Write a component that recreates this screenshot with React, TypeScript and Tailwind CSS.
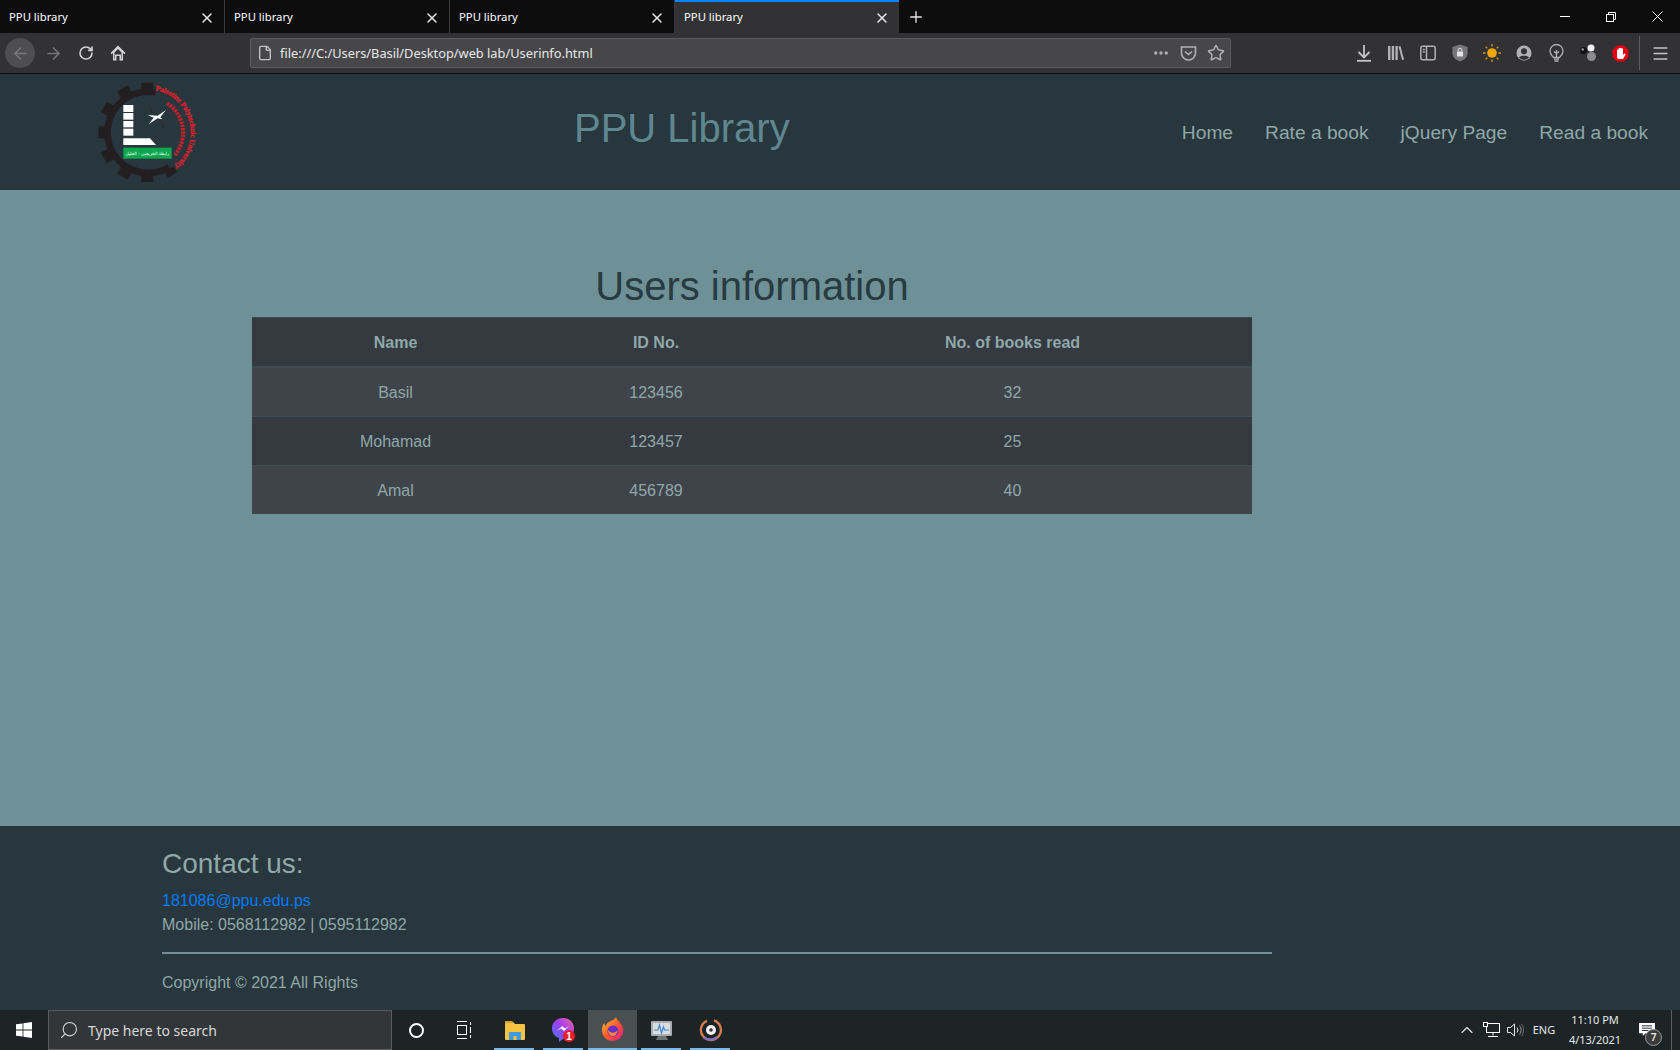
import { ArrowLeft, ArrowRight, ChevronUp, Ellipsis, File, Menu, Plus, RotateCw, Search, Star, X } from "lucide-react"

const Tab = ({ active }: { active?: boolean }) => (
  <div className={active ? "w-[224px] h-full flex items-center pl-[9px] pr-[9px] bg-[#323234] border-t-2 border-[#0a84ff] text-white" : "w-[225px] h-full flex items-center pl-[9px] pr-[9px] pt-[2px] border-r border-[#3a3a3c] text-white"}>
    <span className="flex-1 text-[11.3px]">PPU library</span>
    <X size={16} strokeWidth={2.2} className="text-[#e8e8e8]" />
  </div>
)

const Logo = () => (
  <svg viewBox="0 12 390 324" className="w-[130px] h-[108px] shrink-0">
    <g fill="#231f20">
      <path d="M227 67A122 122 0 1 0 268 291" fill="none" stroke="#231f20" strokeWidth="20" />
      <rect x="184" y="38" width="36" height="26" />
      <rect x="184" y="310" width="36" height="26" />
      <rect x="55" y="169" width="26" height="36" />
      <rect x="116" y="53" width="36" height="26" transform="rotate(-30 134 66)" />
      <rect x="65" y="104" width="36" height="26" transform="rotate(-60 83 117)" />
      <rect x="65" y="244" width="36" height="26" transform="rotate(60 83 257)" />
      <rect x="116" y="295" width="36" height="26" transform="rotate(30 134 308)" />
      <rect x="256" y="295" width="32" height="22" transform="rotate(-30 272 306)" />
      <path d="M208 108l8 12-3 0 8 10-11-9 3 0zM244 156l8 12-3 0 8 10-11-9 3 0z" />
    </g>
    <rect x="130" y="105" width="30" height="21" fill="#fff" />
    <rect x="130" y="129" width="30" height="20" fill="#fff" />
    <rect x="130" y="153" width="30" height="19" fill="#fff" />
    <rect x="130" y="176" width="30" height="21" fill="#fff" />
    <polygon points="130,205 210,205 228,225 130,225" fill="#fff" />
    <path d="M203 135l30 2 25-17-17 22 6 6-14-3-27 18 15-20z" fill="#fff" />
    <rect x="130" y="233" width="145" height="33" fill="#0ca74f" />
    <text x="202" y="254" textAnchor="middle" fill="#fff" fontSize="13" fontFamily="'DejaVu Sans', sans-serif">رابطة الخريجين - الخليل</text>
    <path id="logo-arc" d="M226 61A128 128 0 0 1 240 310" fill="none" />
    <text fill="#e0202c" stroke="#e0202c" strokeWidth="0.8" fontSize="22" fontWeight="700" fontFamily="'Liberation Serif', serif" textLength="295" lengthAdjust="spacing">
      <textPath href="#logo-arc">Palestine Polytechnic University</textPath>
    </text>
    <path d="M262 100A105 105 0 0 1 285 255" stroke="#c8202a" strokeWidth="12" strokeDasharray="7 3" fill="none" />
  </svg>
)

const Pocket = () => (
  <svg width="17" height="17" viewBox="0 0 17 17" fill="none" stroke="#b1b1b3" strokeWidth="1.6"><path d="M1.5 2h14v6a7 7 0 0 1-14 0z" /><path d="M5 6.5l3.5 3 3.5-3" /></svg>
)

const ToolIcons = () => (
  <div className="flex items-center text-[#c4c4c6]">
    <div className="w-[32px] flex justify-center">
      <svg width="14" height="17" viewBox="0 0 14 17" fill="none" stroke="#c4c4c6" strokeWidth="1.8"><path d="M7 0v12M1.500 7L7 12.500 12.500 7" /><path d="M0 15.800h14" /></svg>
    </div>
    <div className="w-[32px] flex justify-center">
      <svg width="16" height="16" viewBox="0 0 16 16" fill="#b1b1b3"><rect x="0" y="1" width="2.4" height="14" /><rect x="3.7" y="1" width="2.4" height="14" /><rect x="7.4" y="1" width="2.4" height="14" /><path d="M10.5 1.5l2-.5 3.5 13.6-2 .4z" /></svg>
    </div>
    <div className="w-[32px] flex justify-center">
      <svg width="16" height="16" viewBox="0 0 16 16" fill="none" stroke="#b1b1b3" strokeWidth="1.5"><rect x=".8" y="1.3" width="14.4" height="13.4" rx="2" /><path d="M6.5 1.5v13M2.8 4.5h2M2.8 7h2" /></svg>
    </div>
    <div className="w-[32px] flex justify-center">
      <svg width="16" height="18" viewBox="0 0 16 18"><path d="M8 .5l7.5 2.5v6c0 4-3 7-7.5 8.500C3.500 16 .5 13 .5 9V3z" fill="#77777a" /><rect x="5" y="7.500" width="6" height="5" rx=".6" fill="#e4e4e4" /><path d="M6.200 7.500V6a1.800 1.800 0 0 1 3.600 0v1.500" fill="none" stroke="#e4e4e4" /></svg>
    </div>
    <div className="w-[32px] flex justify-center">
      <svg width="18" height="18" viewBox="0 0 18 18"><circle cx="9" cy="9" r="4.800" fill="#f0a80c" /><path d="M9 0v2.500M9 15.500V18M0 9h2.500M15.500 9H18M2.600 2.600l1.800 1.800M13.600 13.600l1.800 1.800M2.600 15.400l1.800-1.800M13.600 4.400l1.800-1.800" stroke="#d9980f" strokeWidth="1.300" /></svg>
    </div>
    <div className="w-[32px] flex justify-center">
      <svg width="16" height="16" viewBox="0 0 16 16"><circle cx="8" cy="8" r="7.500" fill="#b1b1b3" /><circle cx="8" cy="6.300" r="3" fill="#323234" /><path d="M3 12.500c1.500-2.500 8.500-2.500 10 0a6.500 6.500 0 0 1-10 0z" fill="#323234" /></svg>
    </div>
    <div className="w-[32px] flex justify-center">
      <svg width="15" height="18" viewBox="0 0 15 18" fill="none" stroke="#b1b1b3" strokeWidth="1.300"><path d="M4.500 13.500C3 11.500 1 10.500 1 7a6.500 6.500 0 0 1 13 0c0 3.500-2 4.500-3.500 6.500z" /><path d="M7.500 6v7.500M5 7.500l2.500 2 2.500-2" /><path d="M5 15.200h5M5.500 17h4" /></svg>
    </div>
    <div className="w-[32px] flex justify-center">
      <svg width="16" height="18" viewBox="0 0 16 18"><circle cx="3.500" cy="6.500" r="3.400" fill="#111" /><circle cx="2.700" cy="5.500" r="1.200" fill="#9a9a9a" /><circle cx="11" cy="4" r="3.500" fill="#f2f2f2" /><circle cx="11.500" cy="12.500" r="4.500" fill="#8c8c8e" /></svg>
    </div>
    <div className="w-[32px] flex justify-center">
      <svg width="17" height="17" viewBox="0 0 17 17"><path d="M5 .5h7L16.500 5v7L12 16.500H5L.5 12V5z" fill="#e60012" /><path d="M5 9V5a.8.8 0 0 1 1.500 0V3.500a.8.8 0 0 1 1.500 0v-.3a.8.8 0 0 1 1.500 0v.5a.8.8 0 0 1 1.500 0V10l1.200-1.200a.8.8 0 0 1 1.100 1.200L11 14H7a2 2 0 0 1-2-2z" fill="#fff" /></svg>
    </div>
  </div>
)

const TaskSlot = ({ active, children }: { active?: boolean; children: React.ReactNode }) => (
  <div className={active ? "w-[49px] h-full flex items-center justify-center bg-[#4a5052] border-b-2 border-[#76b9ed]" : "w-[49px] h-full flex items-center justify-center relative"}>
    {children}
    {!active && <div className="absolute bottom-0 left-[4px] right-[5px] h-[2px] bg-[#76b9ed]" />}
  </div>
)

const rows = [
  { name: "Basil", id: "123456", books: "32", cell: "h-[49px] pt-[2px] bg-[#3f444b] border-b border-[#3f4c55]" },
  { name: "Mohamad", id: "123457", books: "25", cell: "h-[49px] pt-[2px] border-b border-[#3f4c55]" },
  { name: "Amal", id: "456789", books: "40", cell: "h-[48px] pt-[2px] bg-[#3f444b]" },
]

const App = () => {
  return (
    <div className="w-[1680px] h-[1050px] flex flex-col overflow-hidden bg-[#6d9197] font-['Liberation_Sans',Arial,sans-serif]">
      {/* browser chrome */}
      <div className="h-[33px] shrink-0 flex bg-[#0c0c0d] font-['Noto_Sans',sans-serif]">
        <Tab />
        <Tab />
        <Tab />
        <Tab active />
        <div className="w-[33px] h-full flex items-center justify-center text-[#e8e8e8]"><Plus size={18} strokeWidth={1.8} /></div>
        <div className="ml-auto flex items-center h-full text-white">
          <div className="w-[46px] flex justify-center"><div className="w-[10px] h-px bg-white" /></div>
          <div className="w-[46px] flex justify-center">
            <svg width="10" height="10" viewBox="0 0 10 10" fill="none" stroke="#fff"><rect x=".5" y="2.500" width="7" height="7" /><path d="M2.500 2.500v-2h7v7h-2" /></svg>
          </div>
          <div className="w-[46px] flex justify-center">
            <svg width="11" height="11" viewBox="0 0 11 11" stroke="#fff"><path d="M.5.500l10 10M10.500.500l-10 10" /></svg>
          </div>
        </div>
      </div>
      <div className="h-[41px] shrink-0 flex items-center bg-[#323234] border-b border-[#0c0c0d] font-['Noto_Sans',sans-serif]">
        <div className="w-[250px] flex items-center pl-[5px]">
          <div className="w-[30px] h-[30px] rounded-full bg-[#4e4e50] flex items-center justify-center text-[#77777a]"><ArrowLeft size={19} /></div>
          <div className="w-[36px] flex justify-center text-[#77777a]"><ArrowRight size={19} /></div>
          <div className="w-[30px] flex justify-center text-[#d4d4d6]"><RotateCw size={16} strokeWidth={2.4} /></div>
          <div className="w-[33px] flex justify-center">
            <svg width="16" height="16" viewBox="0 0 16 16"><path d="M8 .5L.5 8l1.200 1.200L3 8v7.500h3.500V11h3v4.500H13V8l1.300 1.200L15.500 8z" fill="#d4d4d6" /><path d="M4.500 7.500L8 4l3.500 3.500V14h-.5V9.500H5V14h-.5z" fill="#323234" /></svg>
          </div>
        </div>
        <div className="w-[981px] h-[30px] flex items-center pl-[6px] pr-[5px] bg-[#474749] border border-[#5c5c5e] rounded-[2px]">
          <File size={16} className="text-[#c4c4c6]" />
          <span className="ml-[7px] mt-[2px] flex-1 text-[12.8px] text-[#e8e8ea]">file:///C:/Users/Basil/Desktop/web lab/Userinfo.html</span>
          <Ellipsis size={18} strokeWidth={2.4} className="text-[#b1b1b3]" />
          <div className="ml-[10px] mr-[10px]"><Pocket /></div>
          <Star size={18} strokeWidth={2} className="text-[#b1b1b3]" />
        </div>
        <div className="ml-[117px]"><ToolIcons /></div>
        <div className="w-px h-[34px] bg-[#5c5c5e] ml-[3px]" />
        <div className="flex-1 flex justify-center text-[#c4c4c6]"><Menu size={19} strokeWidth={2} /></div>
      </div>

      {/* site header */}
      <header className="h-[116px] shrink-0 flex items-start pl-[80px] pr-4 bg-[#28363d]">
        <Logo />
        <h1 className="ml-[364px] mt-[30px] text-[40px] leading-[48px] text-[#5f8791]">PPU Library</h1>
        <nav className="ml-auto mt-[44px] flex text-[19.2px] leading-[30px] text-[#8fa8a8]">
          <a className="px-4">Home</a>
          <a className="px-4">Rate a book</a>
          <a className="px-4">jQuery Page</a>
          <a className="px-4">Read a book</a>
        </nav>
      </header>

      <main className="flex-1 pt-[72px] pl-[252px]">
        <h2 className="w-[1000px] text-center text-[40px] leading-[48px] mb-[7px] text-[#2a3a41]">Users information</h2>
        <table className="w-[1000px] table-fixed border-separate border-spacing-0 bg-[#343a40] text-[16px] leading-[24px] text-[#8fa8a8] text-center">
          <colgroup>
            <col className="w-[287px]" />
            <col className="w-[234px]" />
            <col />
          </colgroup>
          <thead>
            <tr>
              <th className="h-[51px] pt-[2px] font-bold border-t border-b-2 border-[#3f4c55]">Name</th>
              <th className="h-[51px] pt-[2px] font-bold border-t border-b-2 border-[#3f4c55]">ID No.</th>
              <th className="h-[51px] pt-[2px] font-bold border-t border-b-2 border-[#3f4c55]">No. of books read</th>
            </tr>
          </thead>
          <tbody>
            {rows.map((r) => (
              <tr key={r.id}>
                <td className={r.cell}>{r.name}</td>
                <td className={r.cell}>{r.id}</td>
                <td className={r.cell}>{r.books}</td>
              </tr>
            ))}
          </tbody>
        </table>
      </main>

      <footer className="h-[184px] shrink-0 pt-[21px] pl-[162px] bg-[#28363d] text-[16px] leading-[24px] text-[#8fa8a8]">
        <h3 className="text-[28px] leading-[34px] mb-[8px]">Contact us:</h3>
        <a className="block text-[#007bff]">181086@ppu.edu.ps</a>
        <div>Mobile: 0568112982 | 0595112982</div>
        <hr className="w-[1110px] mt-[15px] mb-[17px] border-t-2 border-[#6d9197]" />
        <div>Copyright © 2021 All Rights</div>
      </footer>

      {/* windows taskbar */}
      <div className="h-[40px] shrink-0 flex items-center bg-[#1d2426] text-white font-['Noto_Sans',sans-serif]">
        <div className="w-[48px] flex justify-center">
          <svg width="16" height="16" viewBox="0 0 16 16" fill="#fff"><path d="M0 2.300l6.600-.9v6.200H0zM7.400 1.300L16 0v7.600H7.400zM0 8.400h6.600v6.200L0 13.700zM7.400 8.400H16V16l-8.600-1.200z" /></svg>
        </div>
        <div className="w-[344px] h-full flex items-center pl-[10px] bg-[#333638] border border-[#5a5d5f] text-[#d8d8d8]">
          <Search size={20} strokeWidth={1.3} className="-scale-x-100" />
          <span className="ml-[9px] text-[14px]">Type here to search</span>
        </div>
        <div className="w-[48px] flex justify-center">
          <div className="w-[15px] h-[15px] rounded-full border-2 border-white" />
        </div>
        <div className="w-[48px] flex justify-center">
          <svg width="16" height="20" viewBox="0 0 16 20" fill="none" stroke="#fff"><path d="M1 1.500h10M1 18.500h10" /><rect x="1.500" y="5.500" width="9" height="9" /><path d="M14.500 2v3M14.500 7v6M14.500 15v3" /></svg>
        </div>
        <div className="w-[2px]" />
        <TaskSlot>
          <svg width="22" height="24" viewBox="0 0 22 24"><path d="M1 6a2 2 0 0 1 2-2h6l2 2h9a1 1 0 0 1 1 1v14a1 1 0 0 1-1 1H2a1 1 0 0 1-1-1z" fill="#f5c242" /><path d="M1 3h7l2 2H1z" fill="#d99f27" /><rect x="5" y="14" width="12" height="8" fill="#3d9be0" /><rect x="9.500" y="18" width="3" height="4" fill="#f5c242" /></svg>
        </TaskSlot>
        <TaskSlot>
          <svg width="26" height="28" viewBox="0 0 26 28">
            <defs><linearGradient id="msg" x1="0" y1="1" x2="1" y2="0"><stop offset="0" stopColor="#3a7cf5" /><stop offset=".55" stopColor="#a23cf0" /><stop offset="1" stopColor="#f2679a" /></linearGradient></defs>
            <path d="M12 2c6.500 0 11 4.500 11 10.500S18.500 23 12 23l-4 3v-4C3.500 20.500 1 17 1 12.500 1 6.500 5.500 2 12 2z" fill="url(#msg)" />
            <path d="M6 15l5-5 3 2.500 4-2.500-5 5-3-2.500z" fill="#fff" />
            <circle cx="18" cy="20" r="6" fill="#ee1c25" />
            <text x="18" y="23.500" textAnchor="middle" fontSize="10" fontWeight="700" fill="#fff" fontFamily="'Liberation Sans', sans-serif">1</text>
          </svg>
        </TaskSlot>
        <TaskSlot active>
          <svg width="24" height="26" viewBox="0 0 24 26">
            <defs><linearGradient id="fx" x1="0" y1="0" x2="1" y2="1"><stop offset="0" stopColor="#ffc928" /><stop offset=".5" stopColor="#ff5a2c" /><stop offset="1" stopColor="#e31587" /></linearGradient></defs>
            <path d="M15 1c.5 3 3 4 5 7 2 3 3 6 2 9-1.500 5-6 8-10.500 8C5.500 25 1 20 1 14.500 1 11 2 8.500 3.500 7c0 1.500.5 2.500 1.500 3 .5-3 3-4 5-5 2-1 4-2 5-4z" fill="url(#fx)" />
            <circle cx="12" cy="15" r="5.500" fill="#6a2fc9" />
            <path d="M7 14c2 3 7 4 10 0-1 4-3 6-5 6s-5-2-5-6z" fill="#ff8a2c" />
          </svg>
        </TaskSlot>
        <TaskSlot>
          <svg width="24" height="24" viewBox="0 0 24 24"><rect x="1" y="3" width="21" height="15" rx="1" fill="#a9adaf" /><rect x="3" y="5" width="17" height="11" fill="#d9dde0" /><path d="M4 12h4l1.500-5 2 8 2-6 1 3H19" fill="none" stroke="#3f8ad0" strokeWidth="1.200" /><path d="M8 18h8l2 4H6z" fill="#6f7274" /></svg>
        </TaskSlot>
        <TaskSlot>
          <svg width="24" height="24" viewBox="0 0 24 24" fill="none"><path d="M15 2.500A10 10 0 1 1 8 2.800" stroke="#d67b4e" strokeWidth="2.400" /><path d="M18 19a10 10 0 0 1-13 .500" stroke="#8a6bc0" strokeWidth="2.400" /><circle cx="12" cy="12" r="5" fill="#f0f0f0" /><circle cx="12" cy="12" r="1.800" fill="#333" /></svg>
        </TaskSlot>
        <div className="ml-auto flex items-center h-full text-[#e8e8e8]">
          <div className="w-[24px] flex justify-center"><ChevronUp size={20} strokeWidth={1.3} /></div>
          <div className="w-[24px] flex justify-center">
            <svg width="17" height="16" viewBox="0 0 17 16" fill="none" stroke="#fff"><rect x="3.500" y="1.500" width="13" height="9" /><rect x=".5" y=".5" width="4" height="4" fill="#1d2426" /><path d="M10 10.500v3M5 14.500h10" /></svg>
          </div>
          <div className="w-[24px] flex justify-center">
            <svg width="17" height="14" viewBox="0 0 17 14" fill="none" stroke="#e8e8e8"><path d="M.5 4.500h3l4-3.500v12l-4-3.500h-3z" /><path d="M10 4.500a4 4 0 0 1 0 5" /><path d="M12.500 2.500a7 7 0 0 1 0 9" stroke="#9a9a9a" /><path d="M14.500 1a9.500 9.500 0 0 1 0 12" stroke="#6a6a6a" /></svg>
          </div>
          <div className="w-[34px] text-center text-[11px]">ENG</div>
          <div className="w-[56px] ml-[6px] text-center text-[11px] leading-[20px]">
            <div>11:10 PM</div>
            <div>4/13/2021</div>
          </div>
          <div className="w-[48px] flex justify-center relative">
            <svg width="16" height="14" viewBox="0 0 17 15" fill="#fff"><path d="M0 0h17v11H7l-3 3v-3H0z" /><path d="M3 3h11M3 5.500h11M3 8h7" stroke="#1d2426" /></svg>
            <div className="absolute left-[22px] top-[6px] w-[17px] h-[17px] rounded-full bg-[#3b3b3b] border border-[#9a9a9a] flex items-center justify-center text-[10px] font-semibold">7</div>
          </div>
          <div className="w-[9px] h-full border-l border-[#5a5d5f]" />
        </div>
      </div>
    </div>
  )
}

export default App
